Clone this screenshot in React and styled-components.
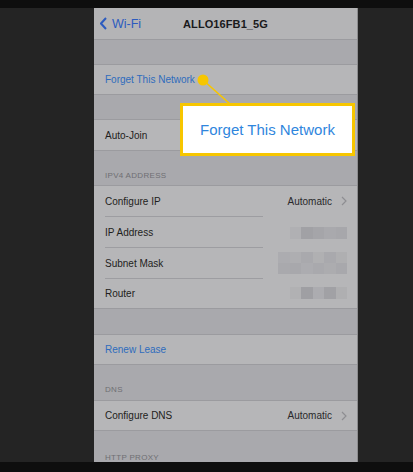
import React from "react";
import styled, { createGlobalStyle } from "styled-components";

const GlobalStyle = createGlobalStyle`
  html, body {
    margin: 0;
    padding: 0;
    background: #242424;
  }
  * { box-sizing: border-box; }
`;

const Frame = styled.div`
  position: relative;
  width: 413px;
  height: 472px;
  display: flex;
  flex-direction: column;
  overflow: hidden;
  background: #242424;
  font-family: "Liberation Sans", Arial, sans-serif;
`;

const Bar = styled.div`
  height: ${(props) => props.h}px;
  background: #0e0e0e;
  flex-shrink: 0;
`;

const Stage = styled.div`
  flex: 1;
  display: flex;
  padding-left: 94px;
  overflow: hidden;
`;

const Phone = styled.div`
  width: 264px;
  display: flex;
  flex-direction: column;
  background: #a9a9ad;
  border-right: 1px solid #8c8c8e;
`;

const NavBar = styled.div`
  height: 32px;
  flex-shrink: 0;
  display: grid;
  grid-template-columns: 1fr auto 1fr;
  align-items: center;
  background: #b4b4b6;
  border-bottom: 1px solid #9b9b9f;
  padding: 0 6px;
`;

const Back = styled.div`
  display: flex;
  align-items: center;
  gap: 5px;
  color: #2c5bbf;
  font-size: 12.5px;
`;

const Title = styled.div`
  font-size: 11px;
  font-weight: bold;
  color: #1a1a1c;
  letter-spacing: 0.1px;
`;

const Spacer = styled.div`
  height: ${(props) => props.h}px;
  flex-shrink: 0;
`;

const Header = styled.div`
  height: ${(props) => props.h}px;
  flex-shrink: 0;
  display: flex;
  align-items: flex-end;
  padding: 0 0 ${(props) => props.pb}px 11px;
  font-size: 8px;
  color: #6f6f73;
  letter-spacing: 0.3px;
`;

const Group = styled.div`
  background: #b6b6b8;
  border-top: 1px solid #9b9b9f;
  border-bottom: 1px solid #9b9b9f;
  flex-shrink: 0;
`;

const Row = styled.div`
  height: ${(props) => props.h || 30}px;
  display: flex;
  align-items: center;
  margin-left: 11px;
  padding-right: 10px;
  font-size: 10px;
  color: ${(props) => (props.action ? "#2e6cbd" : "#1e1e20")};
  border-bottom: ${(props) => (props.divider ? "1px solid #9d9da1" : "none")};
  margin-right: ${(props) => (props.inset ? 94 : 0)}px;
  position: relative;
`;

const Label = styled.span`
  flex: 1;
`;

const Value = styled.span`
  display: flex;
  align-items: center;
  gap: 9px;
  color: #29292b;
  position: ${(props) => (props.floating ? "absolute" : "static")};
  right: -84px;
`;

const Pixels = styled.div`
  position: absolute;
  right: ${(props) => props.right}px;
  top: ${(props) => props.top}px;
  display: grid;
  grid-template-columns: repeat(${(props) => props.cols}, ${(props) => props.cw}px);
  grid-auto-rows: ${(props) => props.ch}px;
`;

const Cell = styled.div`
  background: ${(props) => props.c};
`;

const Callout = styled.div`
  position: absolute;
  left: 180px;
  top: 103px;
  width: 175px;
  height: 53px;
  border: 3px solid #f7c600;
  background: #ffffff;
  display: flex;
  align-items: center;
  justify-content: center;
  font-size: 15px;
  color: #2f86dd;
`;

const Pointer = styled.svg`
  position: absolute;
  left: 0;
  top: 0;
  pointer-events: none;
`;

const Chevron = () => (
  <svg width="6" height="10" viewBox="0 0 6 10">
    <path d="M1 1l4 4-4 4" fill="none" stroke="#8e8e92" strokeWidth="1.2" />
  </svg>
);

const Redacted = ({ rows, cw, ch, top, right }) => (
  <Pixels cols={rows[0].length} cw={cw} ch={ch} top={top} right={right}>
    {rows.flat().map((c, i) => (
      <Cell key={i} c={c} />
    ))}
  </Pixels>
);

export default function App() {
  return (
    <Frame>
      <GlobalStyle />
      <Bar h={8} />
      <Stage>
        <Phone>
          <NavBar>
            <Back>
              <svg width="7" height="13" viewBox="0 0 7 13">
                <path d="M6 1L1 6.5 6 12" fill="none" stroke="#2c5bbf" strokeWidth="2" />
              </svg>
              Wi-Fi
            </Back>
            <Title>ALLO16FB1_5G</Title>
            <div />
          </NavBar>
          <Spacer h={24} />
          <Group>
            <Row h={29} action>Forget This Network</Row>
          </Group>
          <Spacer h={24} />
          <Group>
            <Row h={30}>Auto-Join</Row>
          </Group>
          <Header h={34} pb={5}>IPV4 ADDRESS</Header>
          <Group>
            <Row h={31} divider inset>
              <Label>Configure IP</Label>
              <Value floating>
                Automatic <Chevron />
              </Value>
            </Row>
            <Row h={31} divider inset>
              <Label>IP Address</Label>
              <Redacted
                top={10}
                right={-84}
                cw={11.4}
                ch={12}
                rows={[["#b0b0b3", "#a1a1a5", "#a5a5a9", "#a9a9ad", "#a7a7ab"]]}
              />
            </Row>
            <Row h={31} divider inset>
              <Label>Subnet Mask</Label>
              <Redacted
                top={4}
                right={-84}
                cw={11.5}
                ch={11}
                rows={[
                  ["#acacb0", "#aeaeb1", "#a9a9ad", "#b0b0b2", "#a9a9ad", "#afafb1"],
                  ["#a9a9ad", "#a8a8ac", "#acacb0", "#a9a9ad", "#acacaf", "#a8a8ac"],
                ]}
              />
            </Row>
            <Row h={29} inset>
              <Label>Router</Label>
              <Redacted
                top={8}
                right={-84}
                cw={11.4}
                ch={12}
                rows={[["#b1b1b3", "#9f9fa3", "#acacb0", "#a1a1a5", "#afafb1"]]}
              />
            </Row>
          </Group>
          <Spacer h={25} />
          <Group>
            <Row h={29} action>Renew Lease</Row>
          </Group>
          <Header h={35} pb={6}>DNS</Header>
          <Group>
            <Row h={29}>
              <Label>Configure DNS</Label>
              <Value>
                Automatic <Chevron />
              </Value>
            </Row>
          </Group>
          <Header h={31} pb={0}>HTTP PROXY</Header>
        </Phone>
      </Stage>
      <Bar h={10} />
      <Pointer width="413" height="472">
        <line x1="203" y1="80" x2="230" y2="104" stroke="#f7c600" strokeWidth="1.6" />
        <circle cx="203" cy="80" r="5.5" fill="#f7c600" />
      </Pointer>
      <Callout>Forget This Network</Callout>
    </Frame>
  );
}
